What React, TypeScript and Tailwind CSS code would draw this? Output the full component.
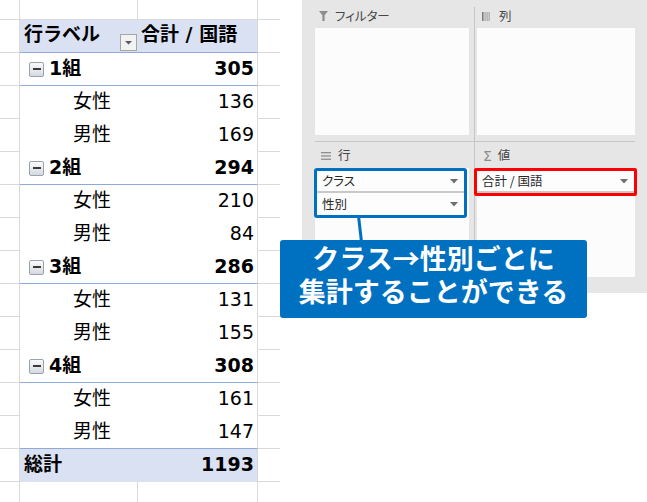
import React from "react";

const G = "border-[#d9d9d9]";
const PIVOT_LINE = "border-b-[#8eaadb]";

function Minus() {
  return (
    <div className="w-[15px] h-[15px] rounded-[2px] border border-[#98a2b0] bg-gradient-to-b from-[#fbfbfb] to-[#d5d9df] flex items-center justify-center shrink-0">
      <div className="w-[8px] h-[2px] bg-[#3a3a3a]" />
    </div>
  );
}

function SideCells({ children }: { children: React.ReactNode }) {
  return (
    <div className="flex h-[33px]">
      <div className={`w-[20px] border-r border-b ${G}`} />
      {children}
      <div className={`flex-1 border-b ${G}`} />
    </div>
  );
}

function GroupRow({ name, value }: { name: string; value: string }) {
  return (
    <SideCells>
      <div className={`w-[238px] border-r border-r-[#d9d9d9] border-b ${PIVOT_LINE} flex items-center pl-[9px] pr-[3px] font-bold`}>
        <Minus />
        <span className="ml-[5px] mb-[3px]">{name}</span>
        <span className="ml-auto mb-[3px]">{value}</span>
      </div>
    </SideCells>
  );
}

function ChildRow({ name, value, last }: { name: string; value: string; last?: boolean }) {
  return (
    <SideCells>
      <div
        className={`w-[238px] border-r border-r-[#d9d9d9] border-b ${
          last ? PIVOT_LINE : "border-b-white"
        } flex items-center pl-[53px] pr-[3px] pb-[3px]`}
      >
        <span>{name}</span>
        <span className="ml-auto">{value}</span>
      </div>
    </SideCells>
  );
}

function Tri({ className = "" }: { className?: string }) {
  return (
    <svg width="8" height="5" viewBox="0 0 8 5" className={className}>
      <polygon points="0,0 8,0 4,4.5" fill="#6f6f6f" />
    </svg>
  );
}

function Field({ label, line = true }: { label: string; line?: boolean }) {
  return (
    <div
      className={`h-[22px] bg-[#fdfdfd] flex items-center pl-[5px] pr-[6px] ${
        line ? "border-b-2 border-[#c9c9c9]" : ""
      }`}
    >
      <span className="text-[#262626] text-[12.5px] leading-none">{label}</span>
      <Tri className="ml-auto" />
    </div>
  );
}

const groups = [
  { name: "1組", total: "305", f: "136", m: "169" },
  { name: "2組", total: "294", f: "210", m: "84" },
  { name: "3組", total: "286", f: "131", m: "155" },
  { name: "4組", total: "308", f: "161", m: "147" },
];

export default function App() {
  return (
    <div className="relative w-[647px] h-[502px] bg-white overflow-hidden flex items-start">
      {/* Spreadsheet */}
      <div className="w-[280px] shrink-0 flex flex-col text-[19px] leading-[24px] text-black font-['DejaVu_Sans','Noto_Sans_CJK_JP',sans-serif]">
        <div className="flex h-[20px]">
          <div className={`w-[20px] border-r border-b ${G}`} />
          <div className={`w-[118px] border-r border-b ${G}`} />
          <div className={`w-[120px] border-r border-b ${G}`} />
          <div className={`flex-1 border-b ${G}`} />
        </div>
        {/* header */}
        <SideCells>
          <div className={`w-[238px] border-r border-r-[#d9d9d9] border-b ${PIVOT_LINE} bg-[#d9e1f2] flex font-bold`}>
            <div className="w-[118px] flex items-end justify-between pl-[4px] pr-[1px] pb-[1px]">
              <span className="self-center mb-[3px]">行ラベル</span>
              <div className="w-[17px] h-[17px] border border-[#a6a6a6] bg-[#f2f2f2] flex items-center justify-center">
                <svg width="7" height="4" viewBox="0 0 7 4">
                  <polygon points="0,0 7,0 3.5,3.5" fill="#595959" />
                </svg>
              </div>
            </div>
            <div className="flex-1 flex items-center pl-[3px] pb-[4px]">
              <span>合計 / 国語</span>
            </div>
          </div>
        </SideCells>
        {groups.map((g, i) => (
          <React.Fragment key={g.name}>
            <GroupRow name={g.name} value={g.total} />
            <ChildRow name="女性" value={g.f} />
            <ChildRow name="男性" value={g.m} last={i === groups.length - 1} />
          </React.Fragment>
        ))}
        {/* total */}
        <SideCells>
          <div className="w-[238px] border-r border-r-[#d9d9d9] bg-[#d9e1f2] flex items-center pl-[4px] pr-[3px] pb-[3px] font-bold">
            <span>総計</span>
            <span className="ml-auto">1193</span>
          </div>
        </SideCells>
        <div className="flex h-[21px]">
          <div className={`w-[20px] border-r ${G}`} />
          <div className={`w-[118px] border-r ${G}`} />
          <div className={`w-[120px] border-r ${G}`} />
          <div className="flex-1" />
        </div>
      </div>

      {/* Pivot field panel */}
      <div className="ml-[22px] w-[345px] h-[293px] bg-[#e6e6e6] pl-[13px] pr-[12px] pt-[7px] flex font-['Noto_Sans_CJK_JP',sans-serif] [font-feature-settings:'palt'] text-[12.5px] text-[#454545]">
        {/* left column */}
        <div className="w-[159px] flex flex-col">
          <div className="h-[21px] flex items-center pb-[3px] pl-[4px]">
            <svg width="9" height="10" viewBox="0 0 9 10" className="mr-[7px]">
              <path d="M0 0 H9 L5.6 4.2 V10 H3.4 V4.2 Z" fill="#8d8d8d" />
            </svg>
            <span className="leading-none">フィルター</span>
          </div>
          <div className="w-[154px] h-[107px] bg-[#fcfcfc]" />
          <div className="mt-[6px] h-px bg-[#c6c6c6]" />
          <div className="h-[26px] flex items-center pl-[6px] pt-[1px]">
            <svg width="10" height="8" viewBox="0 0 10 8" className="mr-[7px]">
              <rect x="0" y="0" width="10" height="1.3" fill="#8d8d8d" />
              <rect x="0" y="3.3" width="10" height="1.3" fill="#8d8d8d" />
              <rect x="0" y="6.6" width="10" height="1.3" fill="#8d8d8d" />
            </svg>
            <span className="leading-none">行</span>
          </div>
          <div className="w-[154px] h-[109px] bg-[#fcfcfc]">
            <div className="ml-[-1px] mr-[2px] border-[3px] border-[#0070c0] rounded-[3px]">
              <Field label="クラス" />
              <Field label="性別" line={false} />
            </div>
          </div>
        </div>
        {/* vertical divider */}
        <div className="w-px bg-[#c6c6c6] h-[276px]" />
        {/* right column */}
        <div className="flex-1 flex flex-col">
          <div className="h-[21px] flex items-center pb-[3px] pl-[7px]">
            <svg width="9" height="9" viewBox="0 0 9 9" className="mr-[8px]">
              <rect x="0" y="0" width="1.6" height="9" fill="#7d7d7d" />
              <rect x="2.6" y="0" width="1" height="9" fill="#9a9a9a" />
              <rect x="4.6" y="0" width="1" height="9" fill="#9a9a9a" />
              <rect x="6.6" y="0" width="1" height="9" fill="#9a9a9a" />
            </svg>
            <span className="leading-none">列</span>
          </div>
          <div className="ml-[2px] h-[107px] bg-[#fcfcfc]" />
          <div className="mt-[6px] h-px bg-[#c6c6c6]" />
          <div className="h-[26px] flex items-center pl-[8px] pt-[1px]">
            <span className="leading-none text-[#8d8d8d] mr-[6px] text-[14px] font-['DejaVu_Sans',sans-serif]">Σ</span>
            <span className="leading-none">値</span>
          </div>
          <div className="ml-[2px] h-[109px] bg-[#fcfcfc]">
            <div className="ml-[-3px] mr-[-2px] border-[3px] border-[#ff0000] rounded-[2px]">
              <Field label="合計 / 国語" />
            </div>
          </div>
        </div>
      </div>

      {/* connector line */}
      <svg className="absolute left-0 top-0 pointer-events-none" width="647" height="502">
        <line x1="358.5" y1="216" x2="361.5" y2="242" stroke="#0070c0" strokeWidth="3" />
      </svg>

      {/* callout */}
      <div className="absolute left-[280px] top-[240px] w-[307px] h-[78px] bg-[#0070c0] rounded-[3px] flex flex-col items-center justify-center pb-[11px] text-white font-bold text-[27px] leading-[33px] font-['Noto_Sans_CJK_JP',sans-serif]">
        <span className="leading-[33px]">クラス→性別ごとに</span>
        <span className="leading-[33px]">集計することができる</span>
      </div>
    </div>
  );
}
